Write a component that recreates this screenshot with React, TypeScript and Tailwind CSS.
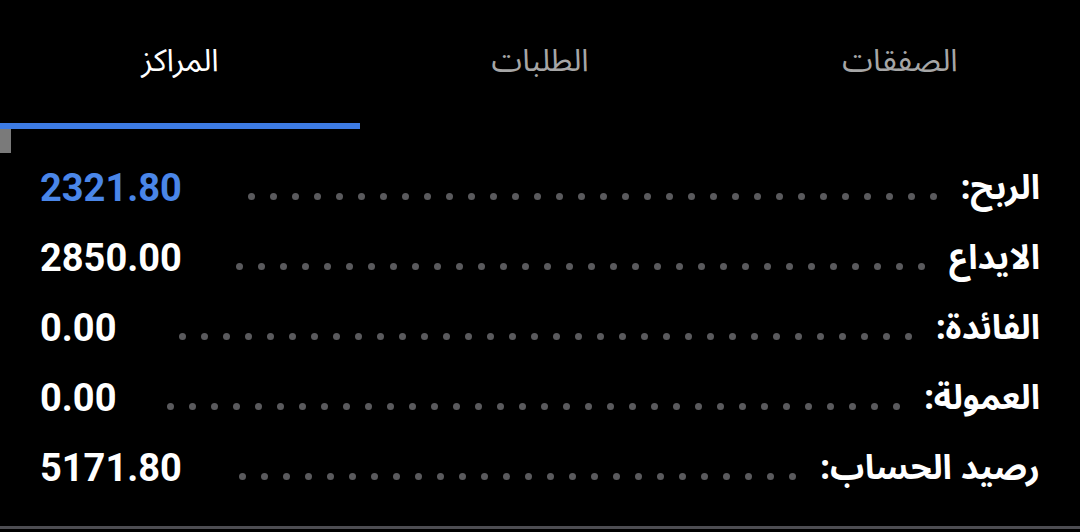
const tabs = [
  { label: 'المراكز', active: true },
  { label: 'الطلبات', active: false },
  { label: 'الصفقات', active: false },
];

const rows = [
  { label: 'الربح:', value: '2321.80', blue: true },
  { label: 'الايداع', value: '2850.00' },
  { label: 'الفائدة:', value: '0.00' },
  { label: 'العمولة:', value: '0.00' },
  { label: 'رصيد الحساب:', value: '5171.80' },
];

const arabic = { fontFamily: '"Noto Sans Arabic", "DejaVu Sans", sans-serif' };

function Leader() {
  // dots wrap onto a hidden second line, so only whole dots show
  return (
    <div className="flex-1 mr-[24px] ml-[50px] mt-[16px] h-[7px] flex flex-wrap gap-x-[15px] gap-y-[20px] overflow-hidden">
      {Array.from({ length: 40 }).map((_, i) => (
        <span key={i} className="shrink-0 w-[7px] h-[7px] rounded-full bg-[#5a5a5d]" />
      ))}
    </div>
  );
}

export default function App() {
  return (
    <div className="relative w-[1080px] h-[532px] bg-black flex flex-col overflow-hidden">
      <div className="grid grid-cols-3 h-[129px]">
        {tabs.map((t) => (
          <div key={t.label} className="flex flex-col">
            <div
              className={`flex-1 flex items-center justify-center text-[31px] ${
                t.active ? 'text-white' : 'text-[#a6a6a6]'
              }`}
              style={arabic}
              dir="rtl"
            >
              {t.label}
            </div>
            <div className={`h-[6px] ${t.active ? 'bg-[#3d7be3]' : ''}`} />
          </div>
        ))}
      </div>

      <div className="absolute left-0 top-[129px] w-[11px] h-[24px] bg-[#7a7a7a]" />

      <div className="flex-1 flex flex-col pt-[24px]">
        {rows.map((r) => (
          <div key={r.label} dir="rtl" className="flex items-center h-[70px] pl-[40px] pr-[40px]">
            <span className="text-[34px] font-bold text-white leading-none" style={arabic}>
              {r.label}
            </span>
            <Leader />
            <span
              dir="ltr"
              className={`text-[38px] font-bold leading-none ${r.blue ? 'text-[#4a86e8]' : 'text-white'}`}
              style={{ fontFamily: 'Roboto, "Liberation Sans", sans-serif' }}
            >
              {r.value}
            </span>
          </div>
        ))}
      </div>

      <div className="h-[3px] bg-[#4d4d52] mb-[3px]" />
    </div>
  );
}
